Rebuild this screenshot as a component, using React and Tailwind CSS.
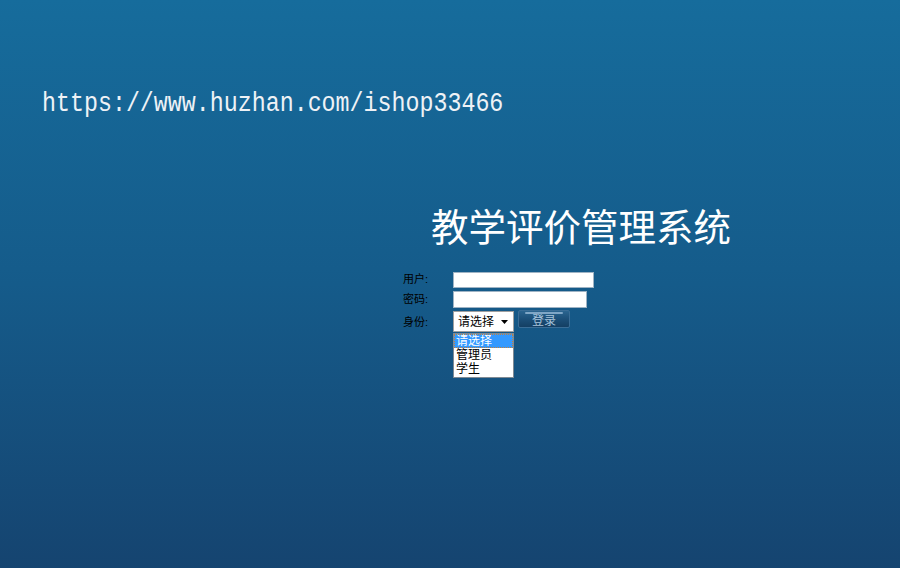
export default function App() {
  const cjk = { fontFamily: '"Liberation Sans", "Noto Sans CJK SC", sans-serif' };

  return (
    <div className="w-[900px] h-[568px] overflow-hidden bg-gradient-to-b from-[#166c9c] via-[#155b8a] to-[#154470]">
      {/* site watermark */}
      <div className="pl-[42px] pt-[90px] h-[114px]">
        <span
          className="inline-block text-[23.3px] leading-[22px] text-[#eef2f6] [transform:scaleY(1.15)] origin-top"
          style={{ fontFamily: '"Liberation Mono", monospace' }}
        >
          https://www.huzhan.com/ishop33466
        </span>
      </div>

      {/* title */}
      <h1
        className="ml-[431px] mt-[89px] text-[37.5px] leading-[44px] text-white whitespace-nowrap"
        style={{ fontFamily: '"Noto Sans CJK SC", serif' }}
      >
        教学评价管理系统
      </h1>

      {/* login form */}
      <div className="ml-[403px] mt-[23px] text-[11px] text-black" style={cjk}>
        <div className="flex items-center h-[19px]">
          <span className="w-[50px] leading-none">用户:</span>
          <div className="w-[141px] h-[16px] bg-white border border-[#9fb3c4]" />
        </div>
        <div className="flex items-center h-[19px] mt-[1px]">
          <span className="w-[50px] leading-none">密码:</span>
          <div className="w-[134px] h-[17px] bg-white border border-[#9fb3c4]" />
        </div>
        <div className="flex items-start mt-[2px]">
          <span className="w-[50px] leading-none mt-[6px]">身份:</span>
          <div className="flex flex-col">
            <div className="w-[61px] h-[21px] bg-white border border-[#a0a0a0] flex items-center pl-[4px] pr-[5px] justify-between">
              <span className="text-[12px] leading-none">请选择</span>
              <svg width="7" height="4" viewBox="0 0 7 4">
                <path d="M0 0h7L3.5 4z" fill="#000" />
              </svg>
            </div>
            <div className="w-[61px] mt-[1px] bg-white border border-[#7f8a94] text-[12px] leading-[14px]">
              <div className="bg-[#3399ff] text-white pl-[2px] h-[14px] outline outline-1 outline-dotted outline-[#c08040] -outline-offset-1">请选择</div>
              <div className="pl-[2px] h-[14px]">管理员</div>
              <div className="pl-[2px] h-[15px]">学生</div>
            </div>
          </div>
          <button className="ml-[4px] -mt-[1px] w-[52px] h-[18px] rounded-[2px] border border-[#3a6d96] bg-gradient-to-b from-[#2b6590] via-[#1c4f78] to-[#143f63] relative text-[12px] leading-[12px] pt-[3px] text-[#a9c4dc]">
            <span className="absolute left-[6px] right-[6px] top-[1px] h-[2px] rounded bg-[#7fa6c6]" />
            登录
          </button>
        </div>
      </div>
    </div>
  );
}
